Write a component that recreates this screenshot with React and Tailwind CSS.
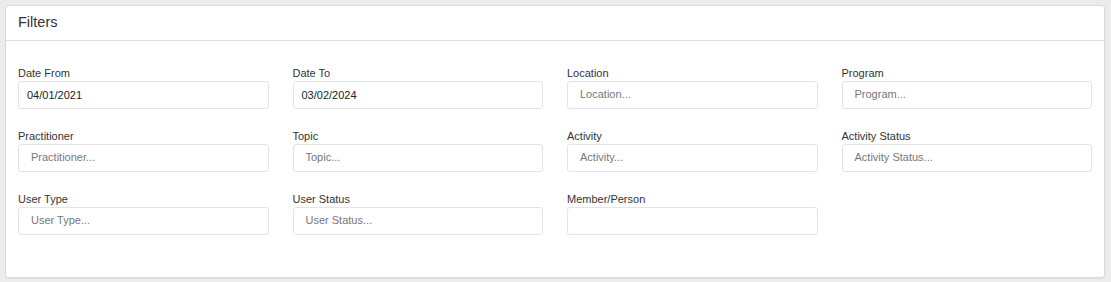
import React from "react";

const rows = [
  [
    { label: "Date From", value: "04/01/2021" },
    { label: "Date To", value: "03/02/2024" },
    { label: "Location", placeholder: "Location..." },
    { label: "Program", placeholder: "Program..." },
  ],
  [
    { label: "Practitioner", placeholder: "Practitioner..." },
    { label: "Topic", placeholder: "Topic..." },
    { label: "Activity", placeholder: "Activity..." },
    { label: "Activity Status", placeholder: "Activity Status..." },
  ],
  [
    { label: "User Type", placeholder: "User Type..." },
    { label: "User Status", placeholder: "User Status..." },
    { label: "Member/Person", empty: true },
    null,
  ],
];

function Field({ f }) {
  if (!f) return <div />;
  return (
    <div className="flex flex-col">
      <div className="h-[15px] text-[11px] leading-[15px] text-[#333]">{f.label}</div>
      {f.value ? (
        <div className="flex h-[28px] items-center rounded-[3px] border border-[#e4e4e4] bg-white px-2 text-[11px] text-[#222]">
          {f.value}
        </div>
      ) : f.empty ? (
        <div className="h-[28px] rounded-[3px] border border-[#e4e4e4] bg-white" />
      ) : (
        <div className="flex h-[28px] items-center rounded-[3px] border border-[#e4e4e4] bg-white px-3 pb-px text-[11px] text-[#777]">
          {f.placeholder}
        </div>
      )}
    </div>
  );
}

export default function App() {
  return (
    <div
      className="min-h-[282px] w-[1111px] bg-[#ececec] pl-[5px] pr-[6px] pt-[5px] pb-[4px]"
      style={{ fontFamily: '"Liberation Sans", Arial, sans-serif' }}
    >
      <div className="h-[273px] rounded-[3px] border border-[#d9d9d9] bg-white shadow-[0_1px_1px_rgba(0,0,0,0.05)]">
        <div className="flex h-[35px] items-center border-b border-[#dcdcdc] px-3 text-[14.5px] text-[#333]">
          Filters
        </div>
        <div className="flex flex-col gap-[20px] px-3 pt-[25px]">
          {rows.map((r, i) => (
            <div key={i} className="grid grid-cols-4 gap-6">
              {r.map((f, j) => (
                <Field key={j} f={f} />
              ))}
            </div>
          ))}
        </div>
      </div>
    </div>
  );
}
